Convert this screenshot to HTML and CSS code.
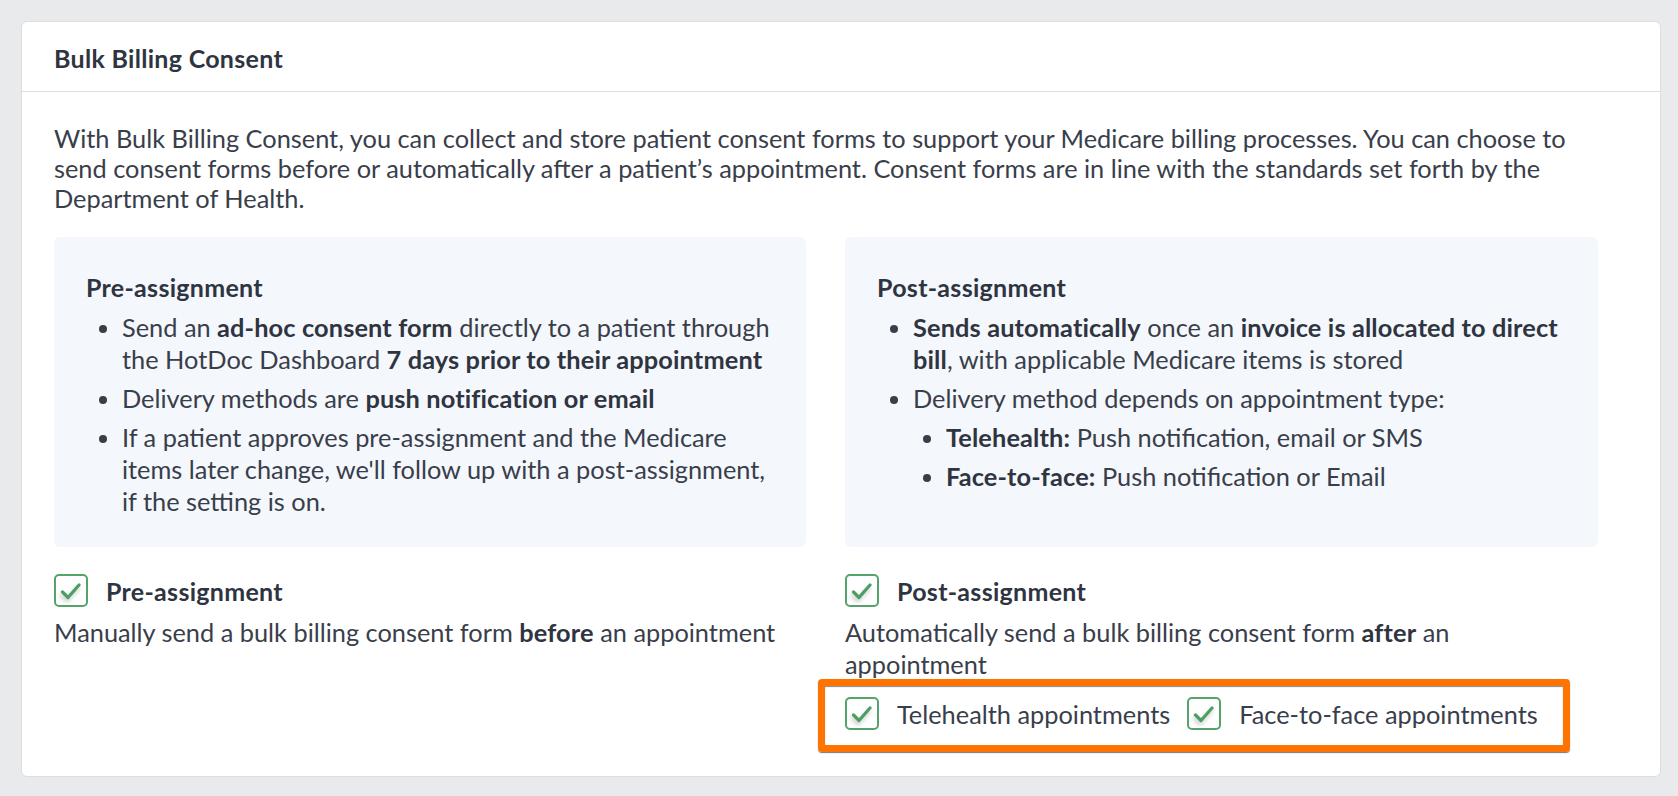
FILE: index.html
```html
<!DOCTYPE html>
<html lang="en">
<head>
  <meta charset="UTF-8" />
  <title>Bulk Billing Consent</title>
  <link rel="stylesheet" href="styles.css">
</head>
<body>

  <!-- Settings card -->
  <div class="card">
    <div class="card-header">
      <h2>Bulk Billing Consent</h2>
    </div>

    <div class="card-body">
      <p class="intro">
        With Bulk Billing Consent, you can collect and store patient consent forms to support your Medicare billing processes. You can choose to
        send consent forms before or automatically after a patient’s appointment. Consent forms are in line with the standards set forth by the
        Department of Health.
      </p>

      <div class="options">
        <div class="info-box">
          <h3>Pre-assignment</h3>
          <ul>
            <li>Send an <b>ad-hoc consent form</b> directly to a patient through the HotDoc Dashboard <b>7 days prior to their appointment</b></li>
            <li>Delivery methods are <b>push notification or email</b></li>
            <li>If a patient approves pre-assignment and the Medicare items later change, we'll follow up with a post-assignment, if the setting is on.</li>
          </ul>
        </div>

        <div class="info-box">
          <h3>Post-assignment</h3>
          <ul>
            <li><b>Sends automatically</b> once an <b>invoice is allocated to direct bill</b>, with applicable Medicare items is stored</li>
            <li>Delivery method depends on appointment type:
              <ul>
                <li><b>Telehealth:</b> Push notification, email or SMS</li>
                <li><b>Face-to-face:</b> Push notification or Email</li>
              </ul>
            </li>
          </ul>
        </div>

        <div class="setting">
          <label class="check-row">
            <span class="checkbox">
              <svg viewBox="0 0 34 34" width="34" height="34"><polyline points="8.5,18 14,23.5 25,11" /></svg>
            </span>
            <span class="check-title">Pre-assignment</span>
          </label>
          <p class="setting-desc">Manually send a bulk billing consent form <b>before</b> an appointment</p>
        </div>

        <div class="setting">
          <label class="check-row">
            <span class="checkbox">
              <svg viewBox="0 0 34 34" width="34" height="34"><polyline points="8.5,18 14,23.5 25,11" /></svg>
            </span>
            <span class="check-title">Post-assignment</span>
          </label>
          <p class="setting-desc">Automatically send a bulk billing consent form <b>after</b> an appointment</p>

          <div class="sub-options">
            <label class="check-row">
              <span class="checkbox">
                <svg viewBox="0 0 34 34" width="34" height="34"><polyline points="8.5,18 14,23.5 25,11" /></svg>
              </span>
              <span>Telehealth appointments</span>
            </label>
            <label class="check-row">
              <span class="checkbox">
                <svg viewBox="0 0 34 34" width="34" height="34"><polyline points="8.5,18 14,23.5 25,11" /></svg>
              </span>
              <span>Face-to-face appointments</span>
            </label>
          </div>
        </div>
      </div>
    </div>
  </div>

</body>
</html>
```

FILE: styles.css
```css
* { box-sizing: border-box; margin: 0; padding: 0; }
html, body {
  font-family: 'Lato', 'Noto Sans', sans-serif;
  background: #e9eaec;
  color: #393e4b;
}

body {
  padding: 21px 17px 21px 21px;
}

b { letter-spacing: 0.13px; }

/* CARD */
.card {
  background: #fff;
  border: 1px solid #dcdde0;
  border-radius: 6px;
}

.card-header {
  height: 70px;
  padding: 0 32px;
  display: flex;
  align-items: center;
  border-bottom: 1px solid #dcdde0;
}

.card-header h2 {
  font-size: 25px;
  font-weight: bold;
  letter-spacing: 0.3px;
  color: #2f3441;
  padding-top: 2px;
}

.card-body {
  max-width: 1608px;
  padding: 31px 32px 39px;
}

.intro {
  font-size: 25.35px;
  line-height: 30px;
  margin-bottom: 24px;
}

/* OPTIONS GRID */
.options {
  display: grid;
  grid-template-columns: 752px 753px;
  column-gap: 39px;
  row-gap: 27px;
}

.info-box {
  background: #f4f7fb;
  border-radius: 6px;
  padding: 34px 32px 30px;
  font-size: 25.35px;
  line-height: 32px;
}

.info-box h3 {
  font-size: 25px;
  font-weight: bold;
  letter-spacing: 0.3px;
  line-height: 32px;
  margin-bottom: 8px;
  color: #2f3441;
}

.info-box ul {
  padding-left: 36px;
}

.info-box li + li,
.info-box li ul {
  margin-top: 7px;
}

.info-box li ul {
  padding-left: 33px;
  list-style: disc;
}

.info-box b { color: #2f3441; }

/* CHECKBOXES */
.setting {
  font-size: 25.35px;
  line-height: 32px;
}

.check-row {
  display: flex;
  align-items: center;
  gap: 18px;
}

.checkbox {
  width: 34px;
  height: 33px;
  border: 2.5px solid #55a36b;
  border-radius: 5px;
  background: #fff;
  display: flex;
  align-items: center;
  justify-content: center;
}

.checkbox svg {
  width: 34px;
  height: 34px;
  flex-shrink: 0;
  filter: drop-shadow(-1px 3px 2px rgba(0, 0, 0, 0.22));
}

.checkbox polyline {
  fill: none;
  stroke: #4c9e62;
  stroke-width: 3.2;
  stroke-linecap: round;
  stroke-linejoin: round;
}

.check-title {
  font-size: 25px;
  font-weight: bold;
  letter-spacing: 0.3px;
  color: #2f3441;
}

.setting-desc {
  margin-top: 9px;
  padding-right: 20px;
}

.setting-desc b { color: #2f3441; }

/* SUB OPTIONS with highlight */
.sub-options {
  position: relative;
  display: inline-flex;
  gap: 17px;
  margin-top: 17px;
}

.sub-options::after {
  content: '';
  position: absolute;
  top: -18px;
  left: -27px;
  right: -32px;
  bottom: -22px;
  border: 7px solid #ff7300;
  border-radius: 4px;
  box-shadow: 0 1px 1px rgba(60, 60, 70, 0.7), inset 0 1px 1px rgba(60, 60, 70, 0.6);
}
```
